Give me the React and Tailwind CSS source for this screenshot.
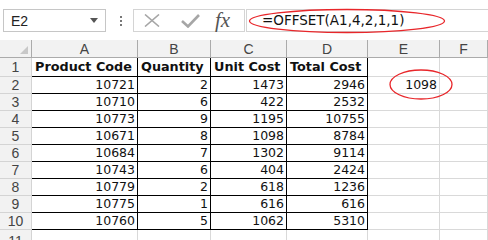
import React from "react";

const cols = ["A", "B", "C", "D", "E", "F"];
const data = [
  ["Product Code", "Quantity", "Unit Cost", "Total Cost"],
  [10721, 2, 1473, 2946],
  [10710, 6, 422, 2532],
  [10773, 9, 1195, 10755],
  [10671, 8, 1098, 8784],
  [10684, 7, 1302, 9114],
  [10743, 6, 404, 2424],
  [10779, 2, 618, 1236],
  [10775, 1, 616, 616],
  [10760, 5, 1062, 5310],
];
const rowH = ["h-[19px]", "h-[17px]", "h-[17px]", "h-[17px]", "h-[17px]", "h-[17px]", "h-[17px]", "h-[17px]", "h-[17px]", "h-[17px]"];

const uiFont = { fontFamily: '"Liberation Sans", Arial, sans-serif' };
const cellFont = { fontFamily: '"DejaVu Sans", Verdana, sans-serif' };

export default function App() {
  return (
    <div className="relative w-[488px] h-[240px] overflow-hidden bg-white">
      {/* Toolbar */}
      <div className="h-[40px] flex items-start pt-[9px] bg-white">
        <div className="ml-[3px] w-[103px] h-[23px] border border-[#c6c6c6] flex items-center justify-between pl-[7px] pr-[7px] text-[14px] leading-none text-[#222]" style={uiFont}>
          <span>E2</span>
          <svg width="8" height="5" viewBox="0 0 8 5"><path d="M0 0 L8 0 L4 5 Z" fill="#555" /></svg>
        </div>
        <div className="w-[30px] h-[23px] flex flex-col items-center justify-center gap-[2px]">
          <div className="w-[2px] h-[2px] bg-[#777]" />
          <div className="w-[2px] h-[2px] bg-[#777]" />
          <div className="w-[2px] h-[2px] bg-[#777]" />
        </div>
        <div className="ml-[-3px] w-[112px] h-[23px] border border-[#d4d4d4] flex items-center">
          <svg className="ml-[10px]" width="16" height="13" viewBox="0 0 16 13">
            <path d="M1 0.5 L15 12.5 M15 0.5 L1 12.5" stroke="#a6a6a6" strokeWidth="1.6" fill="none" />
          </svg>
          <svg className="ml-[21px]" width="19" height="14" viewBox="0 0 19 14">
            <path d="M1 7 L7 12.5 L18 1" stroke="#a6a6a6" strokeWidth="2.6" fill="none" />
          </svg>
          <span className="ml-[15px] text-[21px] leading-none italic text-[#555]" style={{ fontFamily: '"Liberation Serif", "DejaVu Serif", serif' }}>
            fx
          </span>
        </div>
        <div className="ml-[1px] flex-1 h-[23px] border border-[#d4d4d4] border-r-0 flex items-center pl-[15px] text-[13.5px] leading-none text-[#111]" style={cellFont}>
          =OFFSET(A1,4,2,1,1)
        </div>
      </div>

      {/* Grid */}
      <div className="grid grid-cols-[32px_106px_73px_76px_81px_72px_48px]" style={uiFont}>
        {/* header row */}
        <div className="h-[18px] bg-[#f2f2f2] border-r border-b border-[#ababab] relative">
          <svg className="absolute right-[3px] bottom-[3px]" width="8" height="8" viewBox="0 0 8 8"><path d="M8 0 L8 8 L0 8 Z" fill="#c8c8c8" /></svg>
        </div>
        {cols.map((c) => (
          <div key={c} className="h-[18px] bg-[#f2f2f2] border-r border-b border-[#ababab] flex items-center justify-center text-[14px] leading-none text-[#444]">
            {c}
          </div>
        ))}
        {data.map((row, r) => (
          <React.Fragment key={r}>
            <div className={`${rowH[r]} bg-[#f2f2f2] border-r border-b border-[#d4d4d4] flex items-center justify-center text-[14px] leading-none text-[#444]`}>
              {r + 1}
            </div>
            {row.map((v, ci) => (
              <div
                key={ci}
                className={`${rowH[r]} border-r border-b border-black flex items-center ${r === 0 ? "justify-start pl-[3px] font-bold text-[12.8px]" : "justify-end pr-[2px] text-[12.5px]"} leading-none text-[#111] whitespace-nowrap overflow-hidden`}
                style={cellFont}
              >
                {v}
              </div>
            ))}
            <div className={`${rowH[r]} border-r border-b border-[#d9d9d9] flex items-center justify-end pr-[2px] text-[12.5px] leading-none text-[#111]`} style={cellFont}>
              {r === 1 ? 1098 : ""}
            </div>
            <div className={`${rowH[r]} border-r border-b border-[#d9d9d9]`} />
          </React.Fragment>
        ))}
        <div className="h-[10px] bg-[#f2f2f2] border-r border-[#d4d4d4] overflow-hidden flex items-start justify-center text-[14px] leading-none text-[#444]">
          <span className="mt-[4px]">11</span>
        </div>
        {cols.map((c) => (
          <div key={c} className="h-[10px] border-r border-[#d9d9d9]" />
        ))}
      </div>

      {/* Red ellipses */}
      <svg className="absolute left-[248px] top-[8px]" width="198" height="26" viewBox="0 0 198 26">
        <ellipse cx="99" cy="13" rx="97.5" ry="11.5" stroke="#e8262a" strokeWidth="1.3" fill="none" />
      </svg>
      <svg className="absolute left-[389px] top-[69px]" width="64" height="31" viewBox="0 0 64 31">
        <ellipse cx="32" cy="15.5" rx="31" ry="14.5" stroke="#e8262a" strokeWidth="1.3" fill="none" />
      </svg>
    </div>
  );
}
